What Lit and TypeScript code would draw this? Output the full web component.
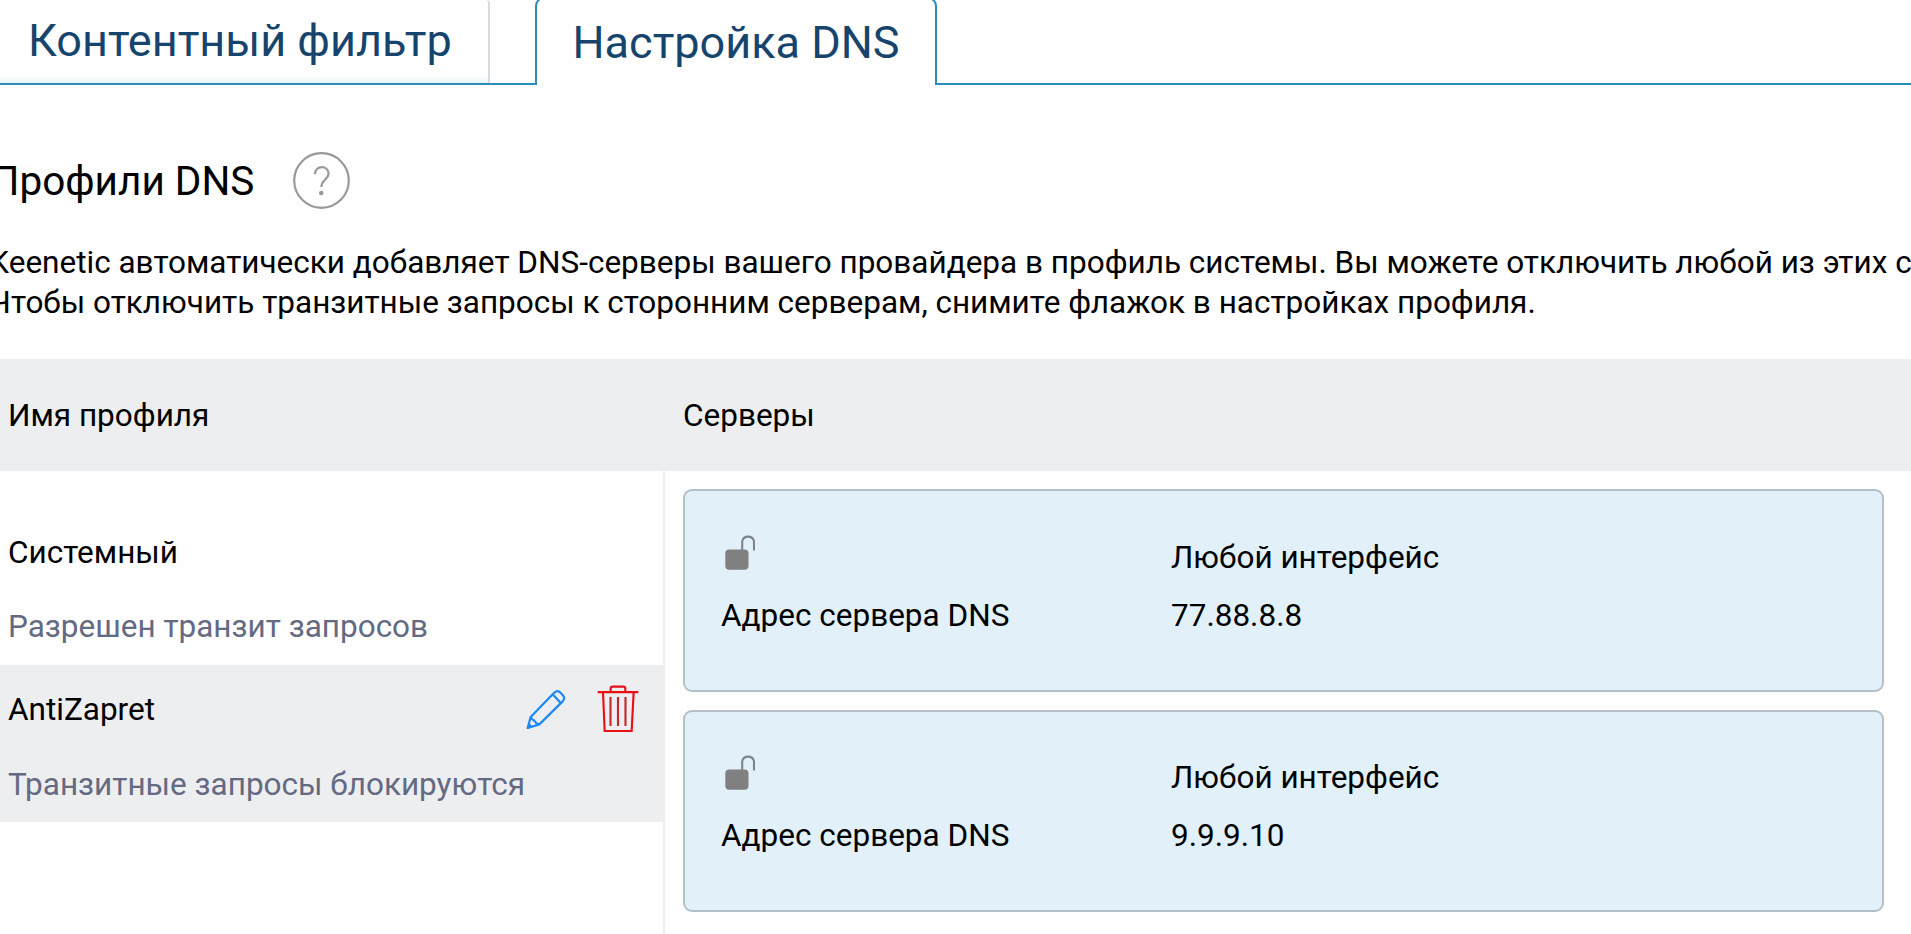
import { LitElement, html, css, svg, nothing } from "lit";
import { customElement, property } from "lit/decorators.js";
import { classMap } from "lit/directives/class-map.js";

interface Profile {
  name: string;
  transit: string;
  selected: boolean;
}

const profiles: Profile[] = [
  { name: "Системный", transit: "Разрешен транзит запросов", selected: false },
  { name: "AntiZapret", transit: "Транзитные запросы блокируются", selected: true },
];

const servers = ["77.88.8.8", "9.9.9.10"];

const pencilIcon = html`<svg class="pencil" viewBox="36 40 120 122" fill="none" stroke="#1e88f5" stroke-width="6.6" stroke-linejoin="round">
  ${svg`<path d="M50 124 L119 53 Q127 43 136 48 L146 58 Q155 67 146 77 L76 146 L41 157 Z"/>
  <path d="M116 56 L140 82 M50 124 Q54 133 61 135 Q65 143 76 146"/>
  <path d="M45 143 L55 153 L41 157 Z" fill="#1e88f5" stroke-width="3"/>`}
</svg>`;

const trashIcon = html`<svg class="trash" viewBox="246 32 126 142" fill="none" stroke="#ea0f14" stroke-width="6.4">
  ${svg`<path d="M248 53.5 H370"/>
  <path d="M287 53 V43 Q287 37 293 37 H325 Q331 37 331 43 V53"/>
  <path d="M264 54 L269 170 H350 L356 54"/>
  <path d="M286.5 68 V155 M309 68 V155 M331.5 68 V155" stroke="#c4282c"/>`}
</svg>`;

const lockIcon = html`<svg class="lock" viewBox="0 0 30 36">
  <rect x="0.3" y="15.4" width="23.2" height="20.3" rx="4" fill="#808080"></rect>
  <path d="M17.2 16 V7.2 A6.1 6.1 0 0 1 29 7.2 V16.6" fill="none" stroke="#7d858a" stroke-width="2.1"></path>
</svg>`;

@customElement("dns-server-card")
class DnsServerCard extends LitElement {
  @property() address = "";

  static styles = css`
    :host {
      display: grid;
      grid-template-columns: 450px 1fr;
      grid-template-rows: 58.5px 58px;
      align-items: center;
      box-sizing: border-box;
      height: 202.5px;
      padding: 37.4px 36px 0;
      border: 2px solid #b3c0c7;
      border-radius: 9px;
      background: #e2f0fa;
      line-height: 40px;
    }
    .lock {
      display: block;
      width: 30px;
      height: 36px;
      margin: -11.4px 0 0 4.2px;
    }
  `;

  render() {
    return html`
      ${lockIcon}
      <div>Любой интерфейс</div>
      <div>Адрес сервера DNS</div>
      <div>${this.address}</div>
    `;
  }
}

@customElement("app-root")
class AppRoot extends LitElement {
  static styles = css`
    :host {
      display: block;
      height: 934px;
      overflow: hidden;
      background: #fefefe;
      color: #000;
      font: 31.5px/40px Roboto, sans-serif;
    }
    .tabs {
      display: flex;
      height: 85px;
      color: #16446c;
      font-size: 45px;
      white-space: nowrap;
    }
    .tab {
      box-sizing: border-box;
      flex: none;
    }
    .tab.idle {
      width: 490px;
      height: 83px;
      padding-left: 28px;
      line-height: 81px;
      border-right: 2px solid #d6d9de;
      border-top-right-radius: 4px;
      background: linear-gradient(to top, #e6f5f9, #fefefe 7px);
    }
    .idle-wrap,
    .gap,
    .rest {
      box-sizing: border-box;
      height: 85px;
      border-bottom: 2px solid #2a8db9;
    }
    .gap {
      width: 45px;
    }
    .tab.active {
      width: 402px;
      height: 88px;
      margin-top: -3px;
      padding: 1px 0 0 35.5px;
      line-height: 85px;
      border: 2px solid #2a8db9;
      border-bottom: 0;
      border-radius: 9px 9px 0 0;
    }
    .rest {
      flex: 1;
    }
    .heading {
      display: flex;
      align-items: center;
      gap: 39px;
      height: 58px;
      margin: 67px 0 0 -9.5px;
      font-size: 40.5px;
    }
    .help {
      width: 57px;
      height: 57px;
      margin-top: -1px;
    }
    .intro {
      margin: 32.5px 0 0 -10.7px;
      white-space: nowrap;
    }
    .head {
      display: grid;
      grid-template-columns: 683px 1fr;
      align-items: center;
      box-sizing: border-box;
      height: 112px;
      margin-top: 36.5px;
      padding-top: 1px;
      background: #edeef0;
    }
    .head .name {
      padding-left: 8px;
    }
    .body {
      display: grid;
      grid-template-columns: 665px 1201px;
      column-gap: 18px;
      height: 463px;
    }
    .profiles {
      padding-top: 37px;
      border-right: 2px solid #edeef0;
    }
    .profile {
      box-sizing: border-box;
      height: 157px;
      padding-left: 8px;
    }
    .profile.selected {
      background: #edeef0;
    }
    .line {
      display: flex;
      align-items: center;
      height: 88px;
      padding-right: 24px;
    }
    .line .name {
      flex: 1;
      padding-top: 2px;
    }
    .transit {
      margin-top: 11px;
      color: #636a82;
    }
    .selected .transit {
      margin-top: 12px;
    }
    .pencil {
      width: 40px;
      height: 40.7px;
      margin-right: 31px;
    }
    .trash {
      width: 42px;
      height: 47.3px;
    }
    .servers {
      display: flex;
      flex-direction: column;
      gap: 18px;
      padding-top: 18px;
    }
  `;

  render() {
    return html`
      <nav class="tabs">
        <div class="idle-wrap"><div class="tab idle">Контентный фильтр</div></div>
        <div class="gap"></div>
        <div class="tab active">Настройка DNS</div>
        <div class="rest"></div>
      </nav>
      <div class="heading">
        <span>Профили DNS</span>
        <svg class="help" viewBox="0 0 57 57" fill="none" stroke="#999" stroke-width="2.2">
          <circle cx="28.5" cy="28.5" r="27.3"></circle>
          <path d="M22 22.3 C21.7 12.8 35.7 13 35.6 21.6 C35.4 27.5 28.4 27.8 28.4 35"></path>
          <circle cx="28.2" cy="41" r="2.3" fill="#999" stroke="none"></circle>
        </svg>
      </div>
      <div class="intro">
        Keenetic автоматически добавляет DNS-серверы вашего провайдера в профиль системы. Вы можете отключить любой из этих серверов.<br />
        Чтобы отключить транзитные запросы к сторонним серверам, снимите флажок в настройках профиля.
      </div>
      <div class="head">
        <div class="name">Имя профиля</div>
        <div>Серверы</div>
      </div>
      <div class="body">
        <div class="profiles">
          ${profiles.map(
            (p) => html`
              <div class=${classMap({ profile: true, selected: p.selected })}>
                <div class="line">
                  <div class="name">${p.name}</div>
                  ${p.selected ? html`${pencilIcon}${trashIcon}` : nothing}
                </div>
                <div class="transit">${p.transit}</div>
              </div>
            `
          )}
        </div>
        <div class="servers">
          ${servers.map((s) => html`<dns-server-card .address=${s}></dns-server-card>`)}
        </div>
      </div>
    `;
  }
}
